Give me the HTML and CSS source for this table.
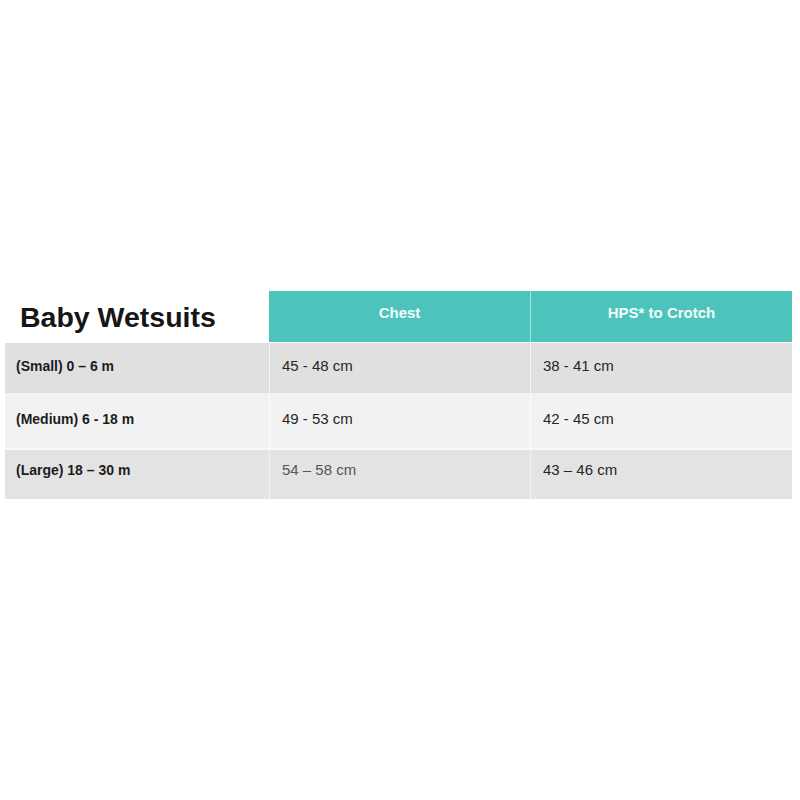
FILE: index.html
```html
<!DOCTYPE html>
<html lang="en">
<head>
<meta charset="utf-8">
<title>Baby Wetsuits Size Chart</title>
<link rel="stylesheet" href="styles.css">
</head>
<body>
<div class="sheet">
  <div class="chart">
    <div class="title-cell"><h1 class="title">Baby Wetsuits</h1></div>
    <div class="head">Chest</div>
    <div class="head head-last">HPS* to Crotch</div>

    <div class="cell label r1">(Small) 0 – 6 m</div>
    <div class="cell num r1 sep">45 - 48 cm</div>
    <div class="cell num r1 sep">38 - 41 cm</div>

    <div class="cell label r2 light">(Medium) 6 - 18 m</div>
    <div class="cell num r2 light sep">49 - 53 cm</div>
    <div class="cell num r2 light sep">42 - 45 cm</div>

    <div class="cell label r3">(Large) 18 – 30 m</div>
    <div class="cell num r3 sep faded">54 – 58 cm</div>
    <div class="cell num r3 sep">43 – 46 cm</div>
  </div>
</div>
</body>
</html>
```

FILE: styles.css
```css
html, body {
  margin: 0;
  padding: 0;
  background: #ffffff;
}

body {
  font-family: "Liberation Sans", Arial, sans-serif;
  color: #1f1f1f;
}

.sheet {
  width: 800px;
  height: 800px;
  padding: 291px 0 0 5px;
  box-sizing: border-box;
}

.chart {
  display: grid;
  grid-template-columns: 264px 261px 262px;
  grid-template-rows: 52px 50px 55px 51px;
}

.title-cell {
  padding: 10px 0 0 15px;
}

.title {
  margin: 0;
  font-size: 28.5px;
  line-height: 32px;
  font-weight: 700;
  color: #161616;
}

.head {
  background: #4cc4bc;
  color: #f2fbfa;
  font-size: 15px;
  line-height: 20px;
  font-weight: 700;
  text-align: center;
  padding-top: 12px;
  box-sizing: border-box;
  height: 51px;
}

.head-last {
  border-left: 1px solid #a9e3df;
}

.cell {
  background: #e1e1e1;
  line-height: 20px;
  box-sizing: border-box;
}

.label {
  font-size: 14px;
  font-weight: 700;
  padding-left: 11px;
  color: #1c1c1c;
}

.num {
  font-size: 15px;
  padding-left: 12px;
  color: #262626;
}

.sep {
  border-left: 1px solid #f4f4f4;
}

.r1 {
  padding-top: 13px;
  background: #e0e0e0;
}

.r2 {
  padding-top: 16px;
}

.r3 {
  padding-top: 10px;
  background: #e3e3e3;
  border-top: 2px solid #fafafa;
}

.light {
  background: #f2f2f2;
}

.light.sep {
  border-left: 1px solid #fafafa;
}

.faded {
  color: #555555;
}
```
